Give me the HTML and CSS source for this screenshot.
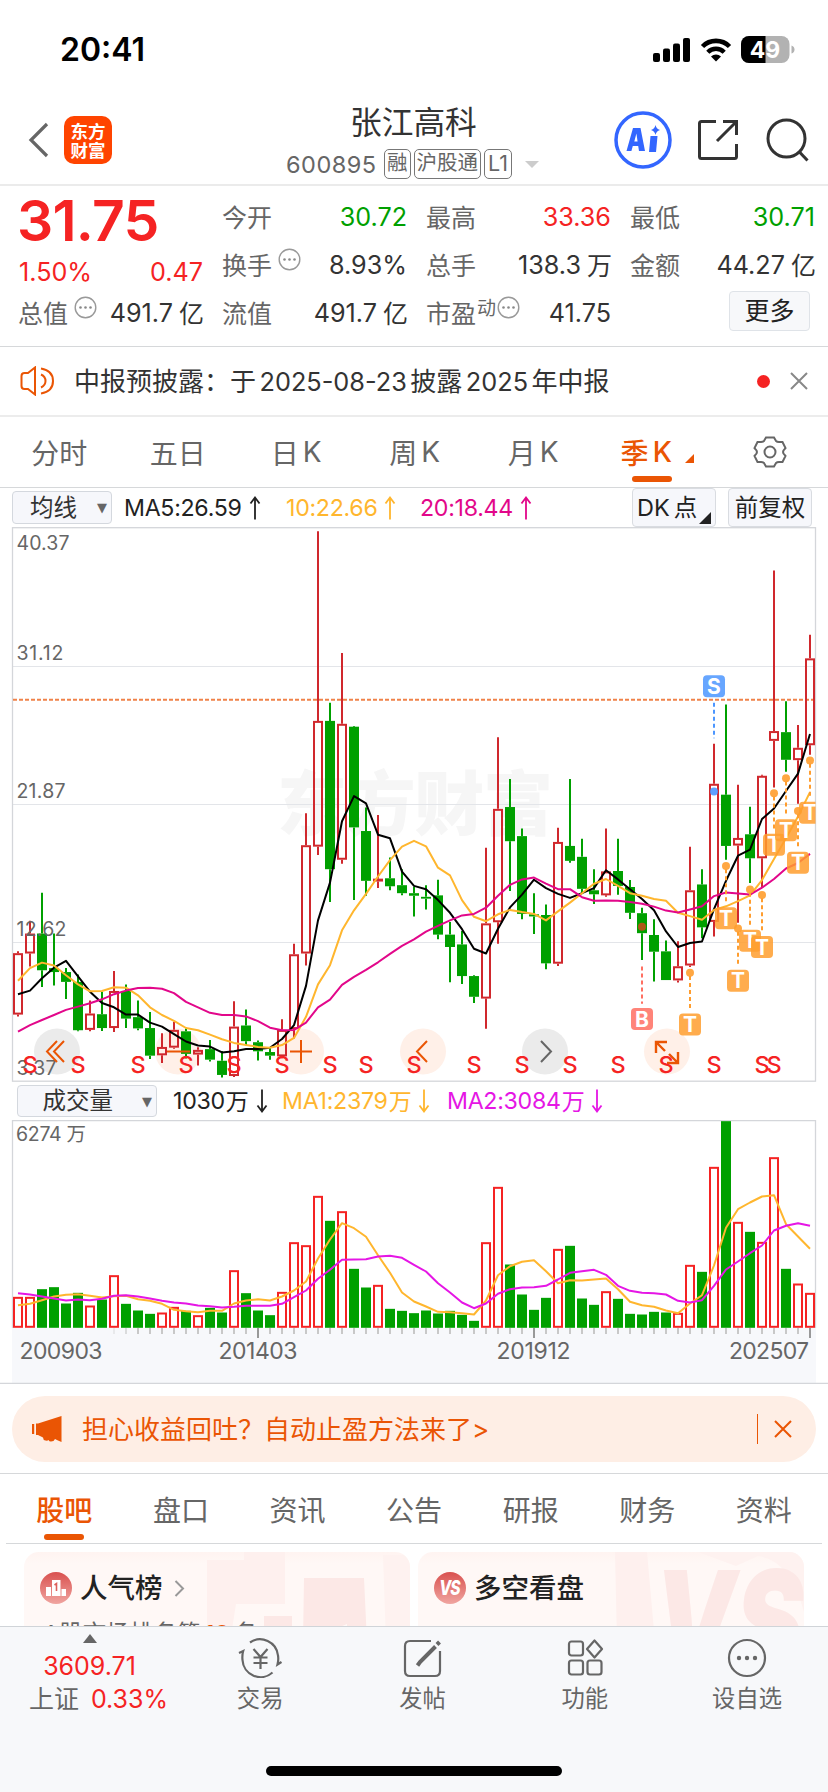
FILE: index.html
```html
<!DOCTYPE html>
<html lang="zh-CN">
<head>
<meta charset="utf-8">
<title>张江高科 600895</title>
<link rel="stylesheet" href="styles.css">
</head>
<body>
<div class="status">
  <span class="clock">20:41</span>
  <div class="status-icons">
    <svg width="38" height="24" viewBox="0 0 38 24"><rect x="0" y="15" width="7" height="9" rx="2"/><rect x="10" y="10.500" width="7" height="13.500" rx="2"/><rect x="20" y="5.500" width="7" height="18.500" rx="2"/><rect x="30" y="0" width="7" height="24" rx="2"/></svg>
    <svg class="wifi" width="32" height="24" viewBox="0 0 32 24"><path d="M2.500 8.500a19 19 0 0 1 27 0" fill="none" stroke="#000" stroke-width="4.600"/><path d="M7.800 14.200a11.500 11.500 0 0 1 16.400 0" fill="none" stroke="#000" stroke-width="4.400"/><path d="M11 18.400a7.200 7.200 0 0 1 10 0L16 23.600z"/></svg>
    <svg class="battery" width="54" height="28" viewBox="0 0 54 28"><defs><clipPath id="bat"><rect width="48.500" height="27" rx="8"/></clipPath></defs><g clip-path="url(#bat)"><rect width="49" height="27" fill="#b2b2b2"/><rect width="24.500" height="27"/></g><path d="M50.500 9.500q3 1 3 4t-3 4z" fill="#b2b2b2"/><text x="24" y="21.800" text-anchor="middle" class="bat-text">49</text></svg>
  </div>
</div>

<header class="header">
  <div class="head-left">
    <svg width="22" height="36" viewBox="0 0 22 36"><path d="M19 2L3 18l16 16" fill="none" stroke="#666" stroke-width="3.200"/></svg>
    <div class="logo"><span>东方</span><span>财富</span></div>
  </div>
  <div class="head-mid">
    <h1>张江高科</h1>
    <div class="code"><span class="num">600895</span><i>融</i><i>沪股通</i><i class="lv">L1</i><svg width="16" height="9"><path d="M1 1h14l-7 7z" fill="#ccc"/></svg></div>
  </div>
  <div class="head-right">
    <svg width="58" height="58" viewBox="0 0 58 58"><circle cx="29" cy="29" r="27" fill="#fff" stroke="#3366ff" stroke-width="3.500"/><path d="M12.500 40L19 17h7.500l4.500 23h-6l-.8-5h-5.400l-1.400 5zM20.300 30.500h3.300l-1.200-8z" fill="#3366ff" fill-rule="evenodd"/><path d="M36.500 25h7l-1.500 16h-7z" fill="#3366ff"/><path d="M41.500 14q.8 4 4.500 5-3.700 1-4.500 5-.8-4-4.500-5 3.700-1 4.500-5z" fill="#3366ff"/></svg>
    <svg width="42" height="42" viewBox="0 0 42 42" fill="none" stroke="#333" stroke-width="3"><path d="M19 2.500H4.500q-2 0-2 2v33q0 2 2 2h33q2 0 2-2V25"/><path d="M26 2.500h13.500V16M39.500 2.500L20 22"/></svg>
    <svg width="44" height="44" viewBox="0 0 44 44" fill="none" stroke="#333" stroke-width="3"><circle cx="20.500" cy="20.500" r="18.500"/><path d="M33 33.500l8.500 9"/></svg>
  </div>
</header>

<section class="quote">
  <div class="qcol first">
    <div class="price">31.75</div>
    <div class="qrow red chg"><b>1.50%</b><b>0.47</b></div>
    <div class="qrow"><span>总值<svg class="dots"><use href="#more"/></svg></span><b>491.7<em>亿</em></b></div>
  </div>
  <div class="qcol">
    <div class="qrow"><span>今开</span><b class="green">30.72</b></div>
    <div class="qrow"><span>换手<svg class="dots"><use href="#more"/></svg></span><b>8.93%</b></div>
    <div class="qrow"><span>流值</span><b>491.7<em>亿</em></b></div>
  </div>
  <div class="qcol">
    <div class="qrow"><span>最高</span><b class="red">33.36</b></div>
    <div class="qrow"><span>总手</span><b>138.3<em>万</em></b></div>
    <div class="qrow"><span>市盈<small>动</small><svg class="dots tight"><use href="#more"/></svg></span><b>41.75</b></div>
  </div>
  <div class="qcol">
    <div class="qrow"><span>最低</span><b class="green">30.71</b></div>
    <div class="qrow"><span>金额</span><b>44.27<em>亿</em></b></div>
    <div class="qrow last"><button class="more">更多</button></div>
  </div>
</section>
<svg class="defs"><symbol id="more" viewBox="0 0 23 23"><circle cx="11.500" cy="11.500" r="10.300" fill="none" stroke="#999" stroke-width="1.400"/><g fill="#888"><circle cx="6.500" cy="11.500" r="1.300"/><circle cx="11.500" cy="11.500" r="1.300"/><circle cx="16.500" cy="11.500" r="1.300"/></g></symbol></svg>

<section class="notice">
  <svg width="36" height="30" viewBox="0 0 36 30" fill="none" stroke="#ea5504" stroke-width="2"><path d="M1.500 10q0-3 3-3H8l7-5.500v27L8 23H4.500q-3 0-3-3z"/><path d="M21 8.500q4.500 2 4.500 6.500T21 21.500"/><path d="M21 2.500q12 2 12 12.500T21 27.500"/></svg>
  <p>中报预披露：于<b>2025-08-23</b>披露<b>2025</b>年中报</p>
  <i class="dot"></i>
  <svg width="18" height="18" viewBox="0 0 18 18"><path d="M1 1l16 16M17 1L1 17" stroke="#888" stroke-width="2"/></svg>
</section>

<nav class="periods">
  <span>分时</span><span>五日</span><span>日<b>K</b></span><span>周<b>K</b></span><span>月<b>K</b></span>
  <span class="on">季<b>K</b><svg width="9" height="9"><path d="M9 0v9H0z" fill="#ea5504"/></svg></span>
  <span><svg class="gear" width="34" height="34" viewBox="0 0 34 34" fill="none" stroke="#666" stroke-width="2"><path d="M13 2.500h8l2 3.500q1 1 3 1h3.500l3 6-2 2.500q-.8 1.500 0 3l2 2.500-3 6H26q-2 0-3 1l-2 3.500h-8L11 28q-1-1-3-1H4.500l-3-6 2-2.500q.8-1.500 0-3l-2-2.500 3-6H8q2 0 3-1z"/><circle cx="17" cy="17" r="5.500"/></svg></span>
</nav>

<section class="bar ma">
  <button class="pick">均线<i>▼</i></button>
  <span class="black">MA5:26.59<svg><use href="#up"/></svg></span>
  <span class="gold">10:22.66<svg><use href="#up"/></svg></span>
  <span class="pink">20:18.44<svg><use href="#up"/></svg></span>
  <button class="opt dk">DK<em>点</em><svg width="12" height="12"><path d="M12 0v12H0z" fill="#222"/></svg></button>
  <button class="opt">前复权</button>
</section>
<svg class="defs"><symbol id="up" viewBox="0 0 12 24"><path d="M6 1.500v22M1.500 7.500L6 1.500l4.500 6" fill="none" stroke="currentColor" stroke-width="1.800"/></symbol><symbol id="down" viewBox="0 0 12 24"><path d="M6 .5v22M1.500 16.500l4.500 6 4.500-6" fill="none" stroke="currentColor" stroke-width="1.800"/></symbol></svg>

<svg id="kline" class="chart" width="828" height="555" viewBox="0 0 828 555"></svg>

<section class="bar vol">
  <button class="pick">成交量<i>▼</i></button>
  <span class="black">1030<em>万</em><svg><use href="#down"/></svg></span>
  <span class="gold">MA1:2379<em>万</em><svg><use href="#down"/></svg></span>
  <span class="violet">MA2:3084<em>万</em><svg><use href="#down"/></svg></span>
</section>

<svg id="volume" class="chart" width="828" height="264" viewBox="0 0 828 264"></svg>

<section class="promo">
  <div class="pill">
    <svg width="32" height="28" viewBox="0 0 32 28" fill="#ea5504"><path d="M0 9h2.200v10H0zM4 8.500h2L29.500 1v26L26 25.500l-3-1.500q-1 2.500-4 2.500-2 0-2.500-1.500-1 1-3 .5-2.500-.5-2.500-3L6 20H4z"/></svg>
    <p>担心收益回吐？自动止盈方法来了<b>&gt;</b></p>
    <i></i>
    <svg width="18" height="18" viewBox="0 0 18 18"><path d="M1 1l16 16M17 1L1 17" stroke="#ea5504" stroke-width="2"/></svg>
  </div>
</section>

<nav class="sections"><span class="on">股吧</span><span>盘口</span><span>资讯</span><span>公告</span><span>研报</span><span>财务</span><span>资料</span></nav>

<section class="cards">
  <article class="card">
    <svg class="art" width="386" height="90" viewBox="0 0 386 90"><path d="M183 8h37V0h41v52h-49l-6 38h-23z" fill="#fef0ee"/><path d="M359 3h27v87h-24z" fill="#fef2f0"/><path d="M280 26h60l3 64h-20V72q-12 5-23 10v8h-21zM240 64h28v26h-28z" fill="#fce8e6"/></svg>
    <div class="card-head">
      <svg width="32" height="32" viewBox="0 0 32 32"><defs><linearGradient id="rg" x2="0" y2="1"><stop stop-color="#d9514f"/><stop offset="1" stop-color="#f0a5a0"/></linearGradient></defs><circle cx="16" cy="16" r="16" fill="url(#rg)"/><path d="M6 15h5v9H6zM12 8h8.500v16H12zM21.500 17H26v7h-4.500z" fill="#fff"/><path d="M14.500 13l2-1.500V19" fill="none" stroke="#dc605c" stroke-width="1.600"/></svg>
      <h2>人气榜</h2>
      <svg width="11" height="17" viewBox="0 0 11 17"><path d="M1.500 1l7.500 7.500L1.500 16" fill="none" stroke="#999" stroke-width="2"/></svg>
    </div>
    <p class="rank">A股市场排名第<b>10</b>名</p>
  </article>
  <article class="card">
    <svg class="art" width="386" height="90" viewBox="0 0 386 90"><path d="M197 0h32l8 90h-38z" fill="#fef0ee"/><path d="M280 0h106v60Q372 8 340 4l-22 10z" fill="#fef2f0"/><text transform="translate(236 118) scale(.74 1)" class="vs">VS</text></svg>
    <div class="card-head">
      <svg width="32" height="32" viewBox="0 0 32 32"><circle cx="16" cy="16" r="16" fill="url(#rg)"/><text transform="translate(15.500 23) scale(.78 1)" text-anchor="middle" class="vs-icon">VS</text></svg>
      <h2>多空看盘</h2>
    </div>
  </article>
</section>

<footer class="tabbar">
  <div class="items">
    <div class="index"><svg width="14" height="9"><path d="M7 0l7 9H0z" fill="#666"/></svg><b>3609.71</b><p>上证<b>0.33%</b></p></div>
    <div class="item"><svg width="44" height="40" viewBox="0 0 44 40" fill="none" stroke="#666" stroke-width="2.200"><path d="M12 4.500A18 18 0 0 1 40 17.500c.5 3 .3 6-.5 9l4-2.500"/><path d="M34.500 34.500A18 18 0 0 1 4.500 22c-.3-3-.2-6 .7-9L1 15"/><path d="M15.500 11l7 8 7-8M22.500 19v12M15.500 19.500h14M15.500 25h14"/></svg><span>交易</span></div>
    <div class="item"><svg width="40" height="40" viewBox="0 0 40 40" fill="none" stroke="#666" stroke-width="2.200"><path d="M29 3H8Q3 3 3 8v25q0 5 5 5h25q5 0 5-5V13"/><path d="M33.500 8.500L18 24l-2.500 3.500" stroke-width="4"/><path d="M35 6.500l2.500-2.500" stroke-width="4"/></svg><span>发帖</span></div>
    <div class="item"><svg width="40" height="40" viewBox="0 0 40 40" fill="none" stroke="#666" stroke-width="2.200"><rect x="4" y="3.500" width="14" height="14" rx="2.500"/><rect x="4" y="22.500" width="14" height="14" rx="2.500"/><rect x="22.500" y="22.500" width="14" height="14" rx="2.500"/><path d="M29.500 2.500l7.500 8.500-7.500 8.500L22 11z" stroke-linejoin="round"/></svg><span>功能</span></div>
    <div class="item"><svg width="40" height="40" viewBox="0 0 40 40"><circle cx="20" cy="20" r="18" fill="none" stroke="#666" stroke-width="2.200"/><g fill="#666"><circle cx="12" cy="20" r="2.200"/><circle cx="20" cy="20" r="2.200"/><circle cx="28" cy="20" r="2.200"/></g></svg><span>设自选</span></div>
  </div>
  <div class="home"></div>
</footer>
<script src="chart.js"></script>
</body>
</html>
```
FILE: styles.css
```css
* { box-sizing: border-box; }
body { margin: 0; width: 828px; height: 1792px; overflow: hidden; background: #fff; color: #333; display: flex; flex-direction: column; font-family: Inter, "Noto Sans CJK SC", sans-serif; }
body > * { flex: none; }
h1, h2, p { margin: 0; font-weight: 400; }
b, i, em { font-weight: 400; font-style: normal; }
svg { display: block; flex: none; }
button { font: inherit; color: inherit; padding: 0; }
.defs { width: 0; height: 0; position: absolute; }
.red { color: #f52323; }
.green { color: #00a000; }

.status { height: 88px; padding: 11px 33px 0 60px; display: flex; justify-content: space-between; align-items: center; }
.clock { font-size: 32px; font-weight: 600; color: #000; letter-spacing: 0; }
.status-icons { display: flex; align-items: center; }
.wifi { margin: 0 9px; }
.bat-text { font: 700 23px Inter, sans-serif; fill: #fff; }

.header { height: 98px; border-bottom: 2px solid #ebebeb; display: grid; grid-template-columns: 270px 1fr 235px; padding: 0 20px 0 28px; }
.head-left { display: flex; align-items: center; gap: 14px; padding-top: 8px; }
.logo { width: 48px; height: 48px; border-radius: 10px; background: #ff4400; color: #fff; display: flex; flex-direction: column; align-items: center; justify-content: center; font: 700 17.500px/19px "Noto Sans CJK SC", sans-serif; }
.head-mid { display: flex; flex-direction: column; padding-top: 14px; }
.head-mid h1 { font-size: 31.700px; line-height: 42px; padding-left: 52px; color: #333; white-space: nowrap; }
.code { display: flex; align-items: center; height: 34px; margin-top: 3px; margin-left: -12px; color: #666; font-size: 23.500px; }
.code .num { letter-spacing: .5px; width: 98px; }
.code i { border: 1.500px solid #777; border-radius: 5px; height: 30px; line-height: 26px; font-size: 20.500px; padding: 0 2px; margin-right: 3px; white-space: nowrap; }
.code .lv { font-size: 21.500px; padding: 0 3px; margin-right: 12px; }
.head-right { display: flex; align-items: center; justify-content: flex-end; gap: 25px; padding-top: 7px; margin-right: -2px; }
.head-right svg:nth-child(3) { margin-left: 2px; }

.quote { height: 161px; border-bottom: 1.500px solid #d6d8da; padding: 7px 13px 0 19px; display: grid; grid-template-columns: repeat(4, 184px); column-gap: 20px; }
.qrow { height: 48px; display: flex; justify-content: space-between; align-items: center; font-size: 25px; white-space: nowrap; }
.qrow span { display: flex; align-items: center; color: #666; margin: -2px 0 0 -1px; }
.qrow b { font-size: 25.200px; display: flex; align-items: center; letter-spacing: 0; }
.qrow em { margin: -2px -1px 0 6px; font-size: 25px; }
.chg b { color: #f52323; }
.dots { width: 23px; height: 23px; margin: 0 0 10px 6px; }
.dots.tight { margin-left: 1px; }
.qrow small { font-size: 19px; margin-bottom: 12px; margin-left: 1px; }
.price { height: 55px; line-height: 56px; font-size: 57px; font-weight: 600; letter-spacing: -.8px; color: #f52323; margin-left: -2px; }
.chg { height: 41px; padding-top: 6px; }
.last { justify-content: flex-end; padding-right: 5px; }
.more { width: 81px; height: 40px; border: 1.500px solid #dfe3e8; border-radius: 4px; background: #f7f8fa; color: #222; font-size: 25px; line-height: 34px; margin-top: -4px; }

.notice { height: 70px; border-bottom: 2px solid #ececec; display: flex; align-items: center; padding: 0 20px 0 20px; }
.notice p { font-size: 26px; margin: -3px 0 0 18px; flex: 1; white-space: nowrap; }
.notice b { margin: 0 3.500px; font-size: 25.300px; }
.dot { width: 13px; height: 13px; border-radius: 50%; background: #f52323; margin-right: 20px; }

.periods { height: 71px; border-bottom: 1.500px solid #d6d8da; display: grid; grid-template-columns: repeat(7, 118.500px); color: #666; font-size: 28px; }
.periods span { position: relative; display: flex; align-items: center; justify-content: center; }
.periods b { margin-left: 4px; }
.on { color: #ea5504; font-weight: 500; }
.on b { font-weight: 500; }
.periods .on { padding-right: 11px; }
.periods .on svg { position: absolute; left: 92px; top: 37px; }
.on::after { content: ""; position: absolute; left: 50%; margin-left: -20px; bottom: 5px; width: 40px; height: 6px; border-radius: 3px; background: #ea5504; }

.bar { display: flex; align-items: center; font-size: 23.200px; white-space: nowrap; }
.bar span { display: flex; align-items: center; letter-spacing: -.3px; }
.bar span svg { width: 12px; height: 24px; margin-left: 7px; }
.ma { height: 39px; padding-left: 12px; }
.vol { height: 38px; padding-left: 17px; }
.pick { width: 100px; height: 33px; border: 1.500px solid #d4d8de; border-radius: 4px; background: #f6f7fb; font-size: 23.500px; line-height: 28px; display: flex; align-items: center; justify-content: flex-end; padding-right: 4px; }
.pick i { font: 13px "DejaVu Sans"; color: #666; margin-left: 20px; }
.vol .pick { width: 140px; height: 32px; }
.vol .pick i { margin-left: 29px; }
.ma .black { width: 162px; margin-left: 12px; }
.ma .gold { width: 134px; }
.ma .pink { width: 212px; }
.vol .black { margin-left: 16px; width: 109px; }
.vol .gold { width: 165px; }
.vol em { font-size: 23px; margin: -2px 0 0 1px; }
.black { color: #222; }
.gold { color: #ffb62e; }
.pink { color: #e2078a; }
.violet { color: #e516e5; }
.opt { position: relative; height: 39px; width: 84px; border: 1.500px solid #d9dce1; border-radius: 4px; background: #f6f7fb; font-size: 23.500px; line-height: 30px; color: #222; }
.dk { margin-right: 12px; text-align: left; padding-left: 4px; }
.dk em { margin-left: 4px; }
.dk svg { position: absolute; right: 4px; bottom: 2px; }
.chart text { font-family: Inter, "Noto Sans CJK SC", sans-serif; }
.axis { font-size: 19.500px; fill: #666; }
.date { font-size: 23px; fill: #666; }
.sell { font-size: 23.500px; font-weight: 500; fill: #f52323; text-anchor: middle; }
.badge { font-size: 21px; font-weight: 700; fill: #fff; text-anchor: middle; }
.chart .mark { font: 900 70px "Noto Sans CJK SC", sans-serif; fill: #f6f6f6; }

.promo { height: 90px; border-bottom: 1.500px solid #d6d8da; padding: 12px 12px 0; }
.pill { height: 66px; border-radius: 33px; background: #feeee5; color: #ea5504; display: flex; align-items: center; padding: 0 24px 0 20px; font-size: 26px; }
.pill p { margin: -3px 0 0 18px; flex: 1; }
.pill i { width: 1.500px; height: 30px; background: #ea5504; margin-right: 16px; }
.sections { height: 70px; margin: 0 6px; border-bottom: 1.500px solid #d6d8da; display: grid; grid-template-columns: repeat(7, 116.600px); color: #666; font-size: 28px; }
.sections span { position: relative; display: flex; align-items: center; justify-content: center; }
.sections .on::after { bottom: 3px; }

.cards { height: 82px; overflow: hidden; padding: 8px 24px 0; display: grid; grid-template-columns: 386px 386px; column-gap: 8px; }
.card { position: relative; height: 120px; border-radius: 15px; overflow: hidden; background: linear-gradient(#fff4f1, #fff8f6 12px); padding: 16px 16px; }
.art { position: absolute; left: 0; top: 0; }
.card-head { position: relative; display: flex; align-items: center; height: 40px; gap: 8px; }
.card h2 { font-size: 27.500px; font-weight: 500; color: #222; line-height: 40px; }
.card-head h2 + svg { margin-left: 3px; }
.rank { position: relative; font-size: 23.500px; margin: 10px 0 0 3px; line-height: 32px; color: #666; }
.rank b { color: #ea5504; font-weight: 600; margin: 0 4px; }
.vs { font: italic 900 138px Inter, sans-serif; fill: #fce8e6; }
.vs-icon { font: italic 800 20px Inter, sans-serif; fill: #fff; letter-spacing: -1px; }

.tabbar { height: 166px; background: #f7f8fa; border-top: 1.500px solid #d0d4d8; display: flex; flex-direction: column; align-items: center; }
.items { width: 828px; height: 139px; display: grid; grid-template-columns: 179px repeat(4, 162.300px); }
.index { display: flex; flex-direction: column; align-items: center; padding-top: 7px; color: #666; font-size: 25px; }
.index b { color: #f52323; font-size: 25px; }
.index > b { line-height: 32px; margin-top: 7px; }
.index p { line-height: 34px; margin-top: 0; padding-left: 18px; white-space: nowrap; }
.index p b { margin-left: 12px; }
.item { display: flex; flex-direction: column; align-items: center; padding-top: 11px; font-size: 23.300px; color: #666; }
.item span { line-height: 34px; margin-top: 4px; }
.home { width: 296px; height: 10px; border-radius: 5px; background: #000; }
```
FILE: chart.js
```js
// Each quarter is 12px wide; vertical values are stored on a finer grid than the pixels.
const X = i => 18 + 12 * i;
const P = v => (v - 20) / 2.751 + .5;
const V = v => (v - 121) / 3 + .5;
const RED = '#d0282d', GREEN = '#00a000';

// direction, high, body top, body bottom, low
const candles = `R 1186 1191 1360 1365|R 1102 1137 1192 1228|G 1025 1137 1238 1284|G 1137 1232 1243 1280|G 1232 1243 1270 1317|G 1250 1270 1403 1406|R 1321 1357 1402 1406|G 1298 1359 1397 1405|R 1240 1295 1397 1408|G 1277 1295 1371 1397|G 1321 1367 1398 1403|G 1353 1397 1473 1482|R 1411 1449 1472 1493|R 1380 1402 1451 1454|G 1398 1406 1468 1481|R 1450 1457 1470 1500|G 1430 1455 1484 1489|G 1460 1487 1526 1533|R 1323 1393 1529 1532|G 1346 1390 1433 1445|G 1431 1436 1461 1486|G 1449 1463 1473 1484|R 1373 1402 1475 1480|R 1165 1194 1400 1426|R 806 894 1192 1225|R 30 552 898 921|G 502 552 960 1050|R 365 560 934 945|G 566 568 845 1045|G 790 855 992 1033|R 811 986 994 1012|G 928 985 1007 1018|G 960 1004 1026 1032|G 1008 1026 1033 1090|G 1004 1036 1041 1071|G 989 1032 1140 1153|G 1105 1140 1174 1271|G 1130 1167 1254 1276|G 1252 1254 1311 1328|R 901 1109 1316 1399|R 597 794 1106 1165|G 712 789 883 1020|G 848 869 1083 1098|G 1026 1084 1090 1138|G 1057 1086 1219 1235|R 846 885 1220 1226|G 712 896 937 942|G 876 926 1014 1026|G 960 1018 1029 1056|R 848 966 1032 1036|G 876 965 1006 1030|G 990 1009 1080 1097|G 1066 1081 1136 1210|G 1098 1141 1187 1269|G 1156 1186 1265 1265|R 1158 1227 1266 1272|R 898 1018 1225 1229|G 960 1002 1120 1150|R 615 725 1105 1145|G 507 755 896 934|R 728 874 895 1107|G 788 864 930 998|R 700 703 930 1012|R 138 580 607 735|G 498 583 659 692|R 563 626 660 780|R 315 380 619 645`
  .split('|').map(s => s.split(' '));

const ma5 = [1304,1294,1260,1231,1212,1255,1297,1328,1340,1360,1360,1382,1393,1414,1434,1445,1448,1464,1461,1455,1455,1451,1427,1389,1281,1101,997,828,759,779,865,875,967,1006,1015,1045,1080,1125,1179,1192,1124,1065,1030,989,1012,1028,1039,1026,1012,963,988,1015,1042,1073,1131,1174,1163,1159,1070,992,923,906,822,793,745,697,588];
const ma10 = [1267,1232,1217,1225,1252,1277,1296,1295,1285,1286,1307,1340,1361,1377,1397,1403,1415,1428,1438,1444,1449,1451,1444,1424,1366,1277,1224,1128,1073,1028,980,935,898,882,897,956,977,1045,1091,1103,1084,1072,1078,1083,1101,1076,1052,1026,1000,987,1006,1026,1033,1042,1047,1080,1089,1099,1072,1062,1048,1032,990,932,875,815,748];
const ma20 = [1407,1389,1375,1361,1347,1338,1329,1318,1304,1294,1287,1286,1289,1301,1325,1340,1355,1361,1361,1365,1378,1396,1403,1402,1382,1340,1319,1278,1256,1237,1216,1193,1171,1153,1132,1116,1101,1087,1083,1066,1033,1003,988,983,1000,1015,1015,1037,1047,1046,1047,1050,1055,1063,1074,1079,1071,1062,1034,1024,1027,1030,1011,987,958,943,918];
const vols = [650,650,627,621,670,638,676,658,585,671,691,701,697,680,692,705,683,697,570,639,691,705,635,486,495,347,422,393,566,622,614,686,692,699,691,700,692,704,722,486,320,553,643,689,653,506,497,655,674,633,656,701,703,695,697,698,554,575,260,123,425,455,485,231,566,610,638];
const vma1 = [675,671,660,649,644,642,647,652,648,647,657,662,671,689,693,696,692,692,670,661,657,661,649,631,604,535,478,429,444,470,525,578,637,664,679,695,696,699,703,661,585,558,545,540,573,609,600,601,598,595,627,665,675,680,691,699,670,645,556,443,387,367,349,345,432,469,506];
const vma2 = [639,643,649,655,661,658,660,656,647,645,649,655,662,667,670,676,678,682,680,677,677,677,671,651,631,596,569,539,538,537,529,527,533,554,574,609,637,667,684,670,641,627,622,621,617,598,578,573,569,584,617,632,638,639,643,662,667,660,617,568,544,519,496,451,437,429,437];

const line = (data, y, color) =>
  `<polyline fill="none" stroke="${color}" stroke-width="2" stroke-linejoin="round" points="${data.map((v, i) => X(i) + ',' + y(v).toFixed(1)).join(' ')}"/>`;
const box = (x, top, bottom, up, color) => up
  ? `<rect x="${x - 4}" y="${top + 1}" width="8" height="${Math.max(bottom - top - 2, .5)}" fill="none" stroke="${color}" stroke-width="2"/>`
  : `<rect x="${x - 5}" y="${top}" width="10" height="${bottom - top}" fill="${color}"/>`;
const label = (x, y, w, cls, t) => `<text x="${x}" y="${y}" textLength="${w}" class="${cls}">${t}</text>`;

// ---- price panel ----
let k = '<defs><clipPath id="panel"><rect x="12" y="0" width="803.500" height="555"/></clipPath></defs>';
k += '<text x="277" y="303" textLength="276" class="mark">东方财富</text>';
[139.500, 277.500, 415.500].forEach(y => k += `<path d="M13 ${y}H815" stroke="#e3e5e9"/>`);
k += '<rect x="12.500" y=".7" width="803" height="553.500" fill="none" stroke="#d4d6da" stroke-width="1.3"/>';
[[57, '#ebebeb'], [178, '#fff0e8'], [301, '#fff0e8'], [423, '#fff0e8'], [545, '#ebebeb'], [667, '#fff0e8']]
  .forEach(([x, c]) => k += `<circle cx="${x}" cy="524.500" r="23" fill="${c}"/>`);
k += '<path d="M13 172.800H815" stroke="#f0824a" stroke-width="2" stroke-dasharray="4 2"/>';
candles.forEach(([d, h, t, b, l], i) => {
  const c = d === 'R' ? RED : GREEN, x = X(i);
  k += `<path d="M${x} ${P(h)}V${P(t)}M${x} ${P(b)}V${P(l)}" stroke="${c}" stroke-width="2"/>` + box(x, P(t), P(b), d === 'R', c);
});
k += label(16.500, 22.500, 53, 'axis', '40.37') + label(16.500, 132.500, 47, 'axis', '31.12') + label(16.500, 270.500, 49, 'axis', '21.87')
  + label(16.500, 408.500, 50, 'axis', '12.62') + label(16.500, 547.500, 40, 'axis', '3.37');
k += line(ma5, P, '#000') + line(ma10, P, '#ffb62e') + line(ma20, P, '#e2078a');
k += '<g fill="none" stroke="#ea5504" stroke-width="2"><path d="M57 514l-10 10.500 10 10.500M64 514l-10 10.500 10 10.500M167 524.500h23M290 524.500h22M301 513v23M427 514l-10 10.500 10 10.500"/><path d="M656 526v-11h11M656 515l9 9M667 536h11v-11M678 536l-9-9" stroke-width="2.4"/></g>';
k += '<path d="M541 514l10 10.500-10 10.500" fill="none" stroke="#666" stroke-width="2"/>';
[30, 78, 138, 186, 234, 282, 330, 366, 414, 474, 522, 570, 618, 666, 714, 762, 774]
  .forEach(x => k += `<text x="${x}" y="546" class="sell">S</text>`);
// trade markers: letter, quarter, dot, dash start, dash end, badge centre
k += '<g clip-path="url(#panel)">';
[['S', 58, 746, 502, 600, 457, '#4c96ff'], ['B', 52, 1118, 1228, 1330, 1372, '#ff6f61'],
 ['T', 56, 1245, 1254, 1344, 1387], ['T', 59, 951, 960, 1052, 1095], ['T', 60, 1123, 1132, 1224, 1267],
 ['T', 61, 1016, 1025, 1114, 1157], ['T', 62, 1031, 1040, 1131, 1174], ['T', 63, 751, 760, 850, 893],
 ['T', 64, 710, 719, 810, 853], ['T', 65, 800, 809, 899, 942], ['T', 66, 661, 670, 762, 805]]
  .forEach(([t, i, dot, a, b, y, c = '#ff9d2e']) => {
    const x = X(i), cy = P(y);
    k += `<g><circle cx="${x}" cy="${P(dot)}" r="4" fill="${t === 'B' ? '#c0501a' : c}" opacity=".9"/><path d="M${x} ${P(a)}V${P(b)}" stroke="${c}" stroke-width="2" stroke-dasharray="4 3"/><rect x="${x - 11}" y="${cy - 11}" width="22" height="22" rx="4" fill="${c}" opacity=".85"/><text x="${x}" y="${cy + 7.6}" class="badge">${t}</text></g>`;
  });
document.getElementById('kline').innerHTML = k + '</g>';

// ---- volume panel ----
let v = '<rect x="12" y="208" width="804" height="55" fill="#f7f8fb"/><path d="M0 263.300H828" stroke="#d4d6da" stroke-width="1.3"/>';
v += '<path d="M12.500 208V.7H815.500V208" fill="none" stroke="#d4d6da" stroke-width="1.3"/>';
vols.forEach((t, i) => {
  const up = candles[i][0] === 'R', x = X(i), major = [20, 43, 66].includes(i);
  v += box(x, V(t), 207.800, up, up ? '#f52323' : GREEN);
  if (i > 7) v += `<path d="M${x} 208v${major ? 10 : 6}" stroke="${major ? '#999' : '#c8c8c8'}" stroke-width="2" opacity="${i === 8 ? .3 : i === 9 ? .6 : 1}"/>`;
});
v += line(vma1, V, '#ffb62e') + line(vma2, V, '#e516e5');
v += label(16, 21, 70, 'axis', '6274 万') + label(19.500, 239, 83, 'date', '200903') + label(218.500, 239, 79, 'date', '201403')
  + label(496.500, 239, 74, 'date', '201912') + label(729, 239, 80, 'date', '202507');
document.getElementById('volume').innerHTML = v;
```
